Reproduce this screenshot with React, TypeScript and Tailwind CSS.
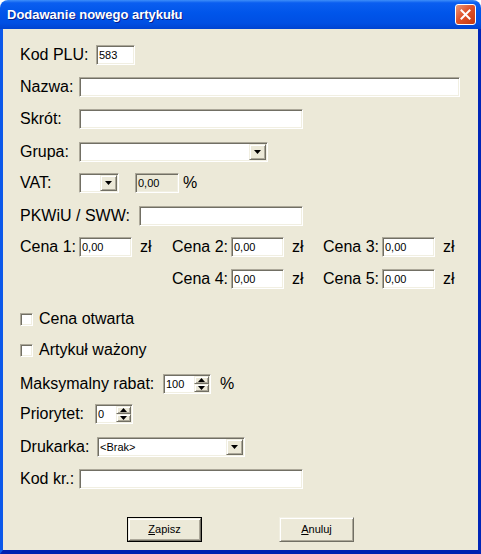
import React from 'react';

// classic 3D edges (Windows XP classic colours)
const sunken =
    'border border-t-[#aca899] border-l-[#aca899] border-r-white border-b-white shadow-[inset_1px_1px_0_#716f64,inset_-1px_-1px_0_#f1efe2]';
const raised =
    'border border-t-[#f1efe2] border-l-[#f1efe2] border-r-[#716f64] border-b-[#716f64] shadow-[inset_1px_1px_0_#ffffff,inset_-1px_-1px_0_#aca899] bg-[#ece9d8]';

const Edit: React.FC<{ w: string; value?: string; grey?: boolean }> = ({ w, value, grey }) => (
    <div className={`${w} h-[20px] ${sunken} ${grey ? 'bg-[#ece9d8]' : 'bg-white'} flex items-center pl-[2px] text-[11px] leading-none`}>
        {value}
    </div>
);

const DownArrow: React.FC = () => (
    <svg width="7" height="4" viewBox="0 0 7 4">
        <path d="M0 0h7L3.5 4z" fill="#000" />
    </svg>
);

const Combo: React.FC<{ w: string; value?: string }> = ({ w, value }) => (
    <div className={`${w} h-[20px] ${sunken} bg-white flex items-center p-[1px]`}>
        <span className="flex-1 pl-[1px] text-[11px] leading-none">{value}</span>
        <div className={`w-[17px] h-[16px] ${raised} flex items-center justify-center`}>
            <DownArrow />
        </div>
    </div>
);

const Spin: React.FC<{ w: string; value: string }> = ({ w, value }) => (
    <div className={`${w} h-[20px] ${sunken} bg-white flex items-center p-[1px]`}>
        <span className="flex-1 pl-[1px] text-[11px] leading-none">{value}</span>
        <div className="flex flex-col w-[15px] h-[16px]">
            <div className={`h-[8px] ${raised} flex items-center justify-center`}>
                <svg width="7" height="4" viewBox="0 0 7 4"><path d="M3.5 0L7 4H0z" fill="#000" /></svg>
            </div>
            <div className={`h-[8px] ${raised} flex items-center justify-center`}>
                <svg width="7" height="4" viewBox="0 0 7 4"><path d="M0 0h7L3.5 4z" fill="#000" /></svg>
            </div>
        </div>
    </div>
);

const Check: React.FC<{ label: string; mt: string }> = ({ label, mt }) => (
    <div className={`flex items-center h-[20px] ${mt}`}>
        <div className={`w-[13px] h-[13px] ${sunken} bg-white`} />
        <span className="ml-[6px]">{label}</span>
    </div>
);

const PriceGroup: React.FC<{ n: number; wide?: boolean }> = ({ n, wide }) => (
    <div className={`flex items-center ${wide ? 'w-[151px]' : 'w-[152px]'}`}>
        <span className="w-[59px]">Cena {n}:</span>
        <Edit w="w-[53px]" value="0,00" />
        <span className="ml-[8px]">zł</span>
    </div>
);

const App: React.FC = () => {
    return (
        <div className="w-[481px] h-[554px] flex flex-col font-['Liberation_Sans',Arial,sans-serif] text-black">
            {/* title bar */}
            <div className="h-[29px] rounded-t-[8px] flex items-center justify-between pl-[7px] pr-[5px] bg-[linear-gradient(180deg,#3d8ef9_0%,#0a5ef0_10%,#0055ea_45%,#004fe3_80%,#0043d0_100%)]">
                <span className="text-white font-bold text-[13px] pt-[1px] [text-shadow:1px_1px_0_#0a1f8a]">Dodawanie nowego artykułu</span>
                <div className="w-[21px] h-[21px] rounded-[3px] border border-white bg-[linear-gradient(135deg,#e99a7c_0%,#e0532b_45%,#c3380f_100%)] flex items-center justify-center">
                    <svg width="11" height="11" viewBox="0 0 11 11">
                        <path d="M1.5 1.5l8 8M9.5 1.5l-8 8" stroke="#fff" strokeWidth="2" strokeLinecap="square" />
                    </svg>
                </div>
            </div>

            {/* dialog body */}
            <div className="flex-1 bg-[#ece9d8] border-l-[3px] border-l-[#0b58ea] border-r-[3px] border-r-[#0026b8] border-b-[4px] border-b-[#0020b0] pl-[17px] pt-[16px] text-[16px]">
                <div className="flex items-center h-[20px]">
                    <span className="w-[76px]">Kod PLU:</span>
                    <Edit w="w-[39px]" value="583" />
                </div>
                <div className="flex items-center h-[20px] mt-[12px]">
                    <span className="w-[59px]">Nazwa:</span>
                    <Edit w="w-[381px]" />
                </div>
                <div className="flex items-center h-[20px] mt-[12px]">
                    <span className="w-[59px]">Skrót:</span>
                    <Edit w="w-[224px]" />
                </div>
                <div className="flex items-center h-[20px] mt-[13px]">
                    <span className="w-[59px]">Grupa:</span>
                    <Combo w="w-[189px]" />
                </div>
                <div className="flex items-center h-[20px] mt-[11px]">
                    <span className="w-[59px]">VAT:</span>
                    <Combo w="w-[40px]" />
                    <div className="ml-[16px]">
                        <Edit w="w-[44px]" value="0,00" grey />
                    </div>
                    <span className="ml-[4px]">%</span>
                </div>
                <div className="flex items-center h-[20px] mt-[13px]">
                    <span className="w-[119px]">PKWiU / SWW:</span>
                    <Edit w="w-[164px]" />
                </div>
                <div className="flex items-center h-[20px] mt-[11px]">
                    <PriceGroup n={1} />
                    <PriceGroup n={2} wide />
                    <PriceGroup n={3} />
                </div>
                <div className="flex items-center h-[20px] mt-[12px]">
                    <div className="w-[152px]" />
                    <PriceGroup n={4} wide />
                    <PriceGroup n={5} />
                </div>

                <Check label="Cena otwarta" mt="mt-[20px]" />
                <Check label="Artykuł ważony" mt="mt-[11px]" />

                <div className="flex items-center h-[20px] mt-[14px]">
                    <span className="w-[143px]">Maksymalny rabat:</span>
                    <Spin w="w-[48px]" value="100" />
                    <span className="ml-[9px]">%</span>
                </div>
                <div className="flex items-center h-[20px] mt-[10px]">
                    <span className="w-[75px]">Priorytet:</span>
                    <Spin w="w-[38px]" value="0" />
                </div>
                <div className="flex items-center h-[20px] mt-[13px]">
                    <span className="w-[77px]">Drukarka:</span>
                    <Combo w="w-[148px]" value="<Brak>" />
                </div>
                <div className="flex items-center h-[20px] mt-[12px]">
                    <span className="w-[59px]">Kod kr.:</span>
                    <Edit w="w-[224px]" />
                </div>

                <div className="flex mt-[28px] pl-[107px] text-[11px]">
                    <div className="w-[75px] h-[25px] border border-black">
                        <div className={`w-full h-full ${raised} flex items-center justify-center`}>
                            <span><span className="underline">Z</span>apisz</span>
                        </div>
                    </div>
                    <div className={`ml-[77px] w-[75px] h-[25px] ${raised} flex items-center justify-center`}>
                        <span><span className="underline">A</span>nuluj</span>
                    </div>
                </div>
            </div>
        </div>
    );
};

export default App;
